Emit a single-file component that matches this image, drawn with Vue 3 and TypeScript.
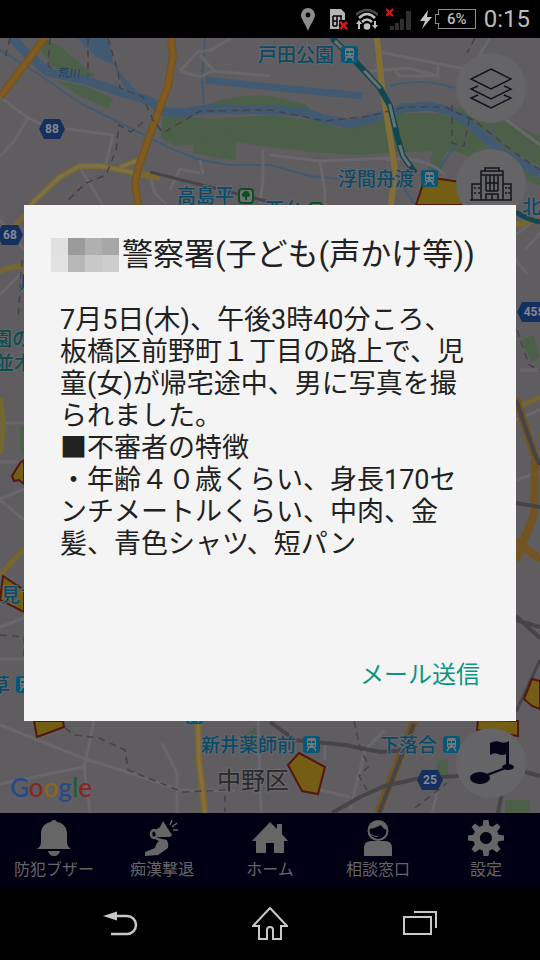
<script setup lang="ts">
interface Tab { id: string; label: string }
interface Station { x: number; y: number; label?: string; lx?: number; ly?: number }
interface Shield { x: number; y: number; w: number; text: string }

const title = '警察署(子ども(声かけ等))'
const lines: string[] = [
  '7月5日(木)、午後3時40分ころ、',
  '板橋区前野町１丁目の路上で、児',
  '童(女)が帰宅途中、男に写真を撮',
  'られました。',
  '■不審者の特徴',
  '・年齢４０歳くらい、身長170セ',
  'ンチメートルくらい、中肉、金',
  '髪、青色シャツ、短パン',
]
const mosaic: string[] = ['#e0e0e0', '#9b9b9b', '#b0b0b0', '#a7a7a7', '#e1e1e1', '#b7b7b7', '#c8c8c8', '#cdcdcd']

const tabs: Tab[] = [
  { id: 'bell', label: '防犯ブザー' },
  { id: 'horn', label: '痴漢撃退' },
  { id: 'home', label: 'ホーム' },
  { id: 'help', label: '相談窓口' },
  { id: 'gear', label: '設定' },
]
const teeth: number[] = [0, 45, 90, 135, 180, 225, 270, 315]

const stations: Station[] = [
  { x: 341, y: 46, label: '戸田公園', lx: 258, ly: 62 },
  { x: 421, y: 170, label: '浮間舟渡', lx: 338, ly: 186 },
  { x: 303, y: 736, label: '新井薬師前', lx: 201, ly: 752 },
  { x: 443, y: 736, label: '下落合', lx: 380, ly: 752 },
  { x: 16, y: 676, label: '草', lx: -9, ly: 692 },
  { x: 186, y: 707 },
]
const shields: Shield[] = [
  { x: 52, y: 129, w: 26, text: '88' },
  { x: 10, y: 235, w: 26, text: '68' },
  { x: 534, y: 312, w: 34, text: '455' },
  { x: 430, y: 780, w: 26, text: '25' },
]
function hexagon(s: Shield): string {
  const h = s.w / 2
  return `${s.x - h},${s.y} ${s.x - h + 5},${s.y - 10} ${s.x + h - 5},${s.y - 10} ${s.x + h},${s.y} ${s.x + h - 5},${s.y + 10} ${s.x - h + 5},${s.y + 10}`
}
</script>

<template>
  <div class="screen">
    <header class="status">
      <svg class="pin" viewBox="0 0 21 26"><path d="M7 2a7 7 0 0 1 7 7c0 4-4 8-7 16C4 17 0 13 0 9a7 7 0 0 1 7-7z" fill="#8c8c8c" /><circle cx="7" cy="9" r="2.4" fill="#000" /></svg>
      <svg class="sim" viewBox="0 0 18 26">
        <path d="M0 3h11l4 4v16H0z" fill="#b5b5b5" />
        <path d="M3 10h9M3 10v10M3 15h4M7 10v10M3 20h4M11 10v5" fill="none" stroke="#000" stroke-width="1.500" />
        <path d="M9 14h9v11H9z" fill="#000" />
        <path d="M10 16l7 7M17 16l-7 7" stroke="#d01818" stroke-width="2.600" />
      </svg>
      <svg class="wifi" viewBox="0 0 22 26">
        <path d="M0 9Q11-1 22 9" fill="none" stroke="#4a4a4a" stroke-width="2.500" />
        <path d="M3 12Q11 4 19 12M6 16Q11 11 16 16" fill="none" stroke="#c0c0c0" stroke-width="2.500" />
        <circle cx="11" cy="20.500" r="3.300" fill="#c0c0c0" />
        <path d="M0 18l3-4 3 4H4v5H2v-5zM16 19h2v-4h2v4h2l-3 4z" fill="#c0c0c0" />
      </svg>
      <svg class="signal" viewBox="0 0 26 26">
        <path d="M4 20h4v4H4zM9 17h4v7H9zM14 13h4v11h-4zM20 5h5v19h-5z" fill="#303030" />
        <path d="M0 3l7 7M7 3l-7 7" stroke="#d01818" stroke-width="2.400" />
      </svg>
      <div class="power">
        <svg class="bolt" viewBox="0 0 12 26"><path d="M8 4L0 15h5l-3 8 10-12H7z" fill="#c4c4c4" /></svg>
        <div class="battery">6%</div>
      </div>
      <time>0:15</time>
    </header>

    <div class="app">
      <main class="map">
        <svg class="tiles" viewBox="0 38 540 775" preserveAspectRatio="xMidYMid slice">
          <rect y="38" width="540" height="775" fill="#605d61" />
          <g fill="#4c6049">
            <path d="M42 38l18 8 22 19 14 11-15 2-30-12-9-14zM57 80l28 6 28 12-4 11-27-12-22-14z" />
            <path d="M200 107q35-14 70-11l35 8 8 7H205zM163 114l45 5 62-4 40 5 30 8 60-15 40 0 40 15 60 50v8l-45-20-40-15-55 1-40 3-50-3-40-5-35-5-60 4-14-8z" />
            <path d="M450 106l35 6 55 24v30l-40-20-35-28zM195 141l41-8v28l-43-8zM435 143l14 3-11 26-10-3z" />
            <path d="M20 428l4-2v32l-4-12zM522 340l12-5 5 22-8 5zM438 761l10-2v20l-11-8zM505 800h25v13h-25zM244 736l12-10 2 8z" />
          </g>
          <g fill="none" stroke="#415a72" stroke-linejoin="round">
            <path d="M12 38L28 55 48 72 85 80 123 93 150 101 165 112 183 113 207 109 270 110 303 112 323 119 353 124 380 116 403 108 430 106 450 111 470 124 503 153 540 174" stroke-width="9" />
            <path d="M205 80L270 87 363 96" stroke-width="7" />
            <path d="M78 38h30l5 24 10 14 22 25-15-3-12-24-3-9-16-6-13-12z" fill="#415a72" stroke="none" />
            <path d="M0 50L40 75 80 103 130 128 170 148 200 160 230 165 270 165 310 176 340 179M205 38L202 80 204 104M390 86q30-9 65 2M455 145l-18 28M492 122v28M400 184l15 20" stroke-width="2" />
          </g>
          <g fill="none" stroke="#69676b" stroke-width="3">
            <path d="M0 97L28 118 45 126 105 134 113 135 105 167M28 118L15 140 0 156M180 71l18-19 13-2 20-12M180 71l20 6 12-6 58 5M200 55l14 16M80 168l22 36M150 172l4 20 12 12M170 190l10-21 20 4M200 160l3 14M263 150v30l-3 24M380 52l90 18 20-32M370 71l38-3 30 8v-10M395 71l5 5 37 0M270 155l50 6 70-3M320 161l5 30v14M500 115l40 30M385 160q40-5 60 15" />
            <path d="M0 423h24M0 462h24M0 499l24-10M0 500l24 20M0 627l24-9M0 659h24M0 220l24 30M0 295l24-25M516 235l24-20M516 260l12 15M525 250l15-17M520 370h20M516 420l24-10M516 480l24-8" />
            <path d="M0 725L85 759 130 773 180 790 235 791M94 721L84 767 90 813M0 784L83 767M162 743l15 30v40M258 721l3 92M325 740v20M300 785l50 12M440 780l-8 33M350 810l15-60 20-20" />
          </g>
          <g fill="none" stroke="#777047" stroke-width="4">
            <path d="M30 205L60 177 80 166 100 166 135 173 160 178M120 167L139 160" stroke="#7b6731" stroke-width="6" />
            <path d="M30 205L60 177 80 166 100 166 135 173M120 167L139 160" stroke="#7c7349" stroke-width="3" />
            <path d="M377 38L382 86 390 136 395 170 391 205" stroke="#836e37" stroke-width="6" />
            <path d="M25 215L0 242M0 272q12-7 24-5M0 398q6 26 0 56M0 575L24 549M516 225l24-5M516 408l24-11" stroke="#77672f" stroke-width="5" />
            <path d="M198 721L199 760 205 813" stroke="#80652b" stroke-width="7" />
            <path d="M198 721L199 760 205 813" stroke="#7f7140" stroke-width="3" />
          </g>
          <g fill="none" stroke="#725321" stroke-width="8">
            <path d="M45 38L0 97M171 38L173 56 168 86 153 126 138 169 135 183 138 205" />
            <path d="M45 38L0 97M171 38L173 56 168 86 153 126 138 169 135 183 138 205" stroke="#7f5b22" stroke-width="5" />
            <path d="M516 398L535 457 534 515 516 560M516 540L540 560M414 721L378 813" />
          </g>
          <g fill="none" stroke="#464447" stroke-width="4">
            <path d="M516 400L535 455 540 465M516 503l24 4M516 616l24 22M516 620l24 7M414 724L379 813" />
            <path d="M332 813L360 797 385 786 420 778 460 776M270 722l25 18 50 5 35 7 25-2M525 772l15 4M498 813l5-25" />
            <path d="M150 172L270 202M540 660L516 712" stroke-width="3" />
          </g>
          <g fill="none" stroke="#454147" stroke-width="1.500" stroke-dasharray="7 5">
            <path d="M108 38L118 72 120 88 143 97 153 120 163 133 200 111 270 110 325 121 370 116 405 107 445 107 475 121 515 153 540 170M50 38L48 65 55 72M88 38v38M10 38l-5 20M143 122l-12 10-12-7-3 25-10 25-20 8-18 17M475 38l-8 15M452 105v38l12 3 8-40" />
            <path d="M22 260l-4 60M517 330l12 35 11 5M0 635l24 2v20M65 728l10 7 24 3 26 12 3 20 55 22 42-2v22M354 721l7 30 8 15-10 10 8 14M415 808l32-25" />
          </g>
          <path d="M332 38L357 63 380 88 390 106 397 136 403 156 415 173" fill="none" stroke="#124751" stroke-width="6" />
          <path d="M332 38L357 63 380 88 390 106 397 136 403 156 415 173" fill="none" stroke="#6a7073" stroke-width="3" stroke-dasharray="24 18" stroke-dashoffset="-4" />
          <path d="M516 212q12 8 24 10" fill="none" stroke="#124751" stroke-width="5" />
          <g fill="#745e14" stroke="#541610" stroke-width="2">
            <path d="M416 205L425 178 440 179 460 182 480 205zM24 460l-4 3-8 13 2 5 5-1 5 4zM3 576L24 590V612L0 600zM34 721l3 16 27-10-1-6zM299 753l26 14-7 27-16-3-14-26zM540 681l-8-2-8 20 8 7 8 3zM477 730l1-10 40 1v15z" />
          </g>

          <g v-for="s in stations" :key="s.x">
            <rect :x="s.x" :y="s.y" width="17" height="17" rx="3" fill="#075878" />
            <rect :x="s.x + 4" :y="s.y + 2" width="9" height="10" rx="2" fill="#75787b" />
            <path :d="`M${s.x + 6} ${s.y + 12}l-2 3M${s.x + 11} ${s.y + 12}l2 3`" stroke="#75787b" stroke-width="1.500" />
            <path :d="`M${s.x + 5} ${s.y + 5}h3v2h-3zM${s.x + 9} ${s.y + 5}h3v2h-3zM${s.x + 5} ${s.y + 9}h2v1h-2zM${s.x + 10} ${s.y + 9}h2v1h-2z`" fill="#075878" />
            <text v-if="s.label" class="place" :x="s.lx" :y="s.ly">{{ s.label }}</text>
          </g>
          <text class="place" x="177" y="203">高島平</text>
          <text class="place" x="265" y="217">西台</text>
          <text class="place" x="522" y="214">北</text>
          <text class="place" x="20" y="288">成</text>
          <text class="place" x="1" y="602">見す</text>
          <text class="place park" x="-7" y="346">園の</text>
          <text class="place park" x="-5" y="370">並木</text>
          <g fill="#706f72" stroke="#0a5020" stroke-width="2">
            <rect x="239" y="189" width="14" height="14" rx="3" />
            <rect x="310" y="203" width="12" height="12" rx="3" />
          </g>
          <path d="M246 191q3 0 3 2 2 1 1 3-1 1-3 1v3h-2v-3q-2 0-3-1-1-2 1-3 0-2 3-2z" fill="#0a5020" />
          <text class="river" x="58" y="76" transform="rotate(5 58 76)">荒川</text>
          <text class="ward" x="217" y="789">中野区</text>
          <g v-for="s in shields" :key="s.text">
            <polygon :points="hexagon(s)" fill="#15305f" />
            <text class="shield" :x="s.x" :y="s.y + 4">{{ s.text }}</text>
          </g>
          <text class="brand" x="10" y="797"><tspan fill="#244a89">G</tspan><tspan fill="#842821">o</tspan><tspan fill="#8b6813">o</tspan><tspan fill="#244a89">g</tspan><tspan fill="#1b602e">l</tspan><tspan fill="#842821">e</tspan></text>
        </svg>

        <div class="tools">
          <button type="button" aria-label="レイヤー">
            <svg viewBox="0 0 70 70" fill="none" stroke="#11101f" stroke-width="1.400">
              <path d="M35 16l20 10-20 10-20-10zM22 33l-7 3 20 10 20-10-7-3M22 42l-7 3 20 10 20-10-7-3" />
            </svg>
          </button>
          <button type="button" aria-label="施設">
            <svg viewBox="0 0 70 70" fill="none" stroke="#12151c" stroke-width="1.500">
              <path d="M14 51h42M16 51V35h9V22h4v-3h14v3h4v13h8v16M25 35v16M47 35v16M29 22h14M30 26v16M34 26v16M38 26v16M42 26v16M30 26h12M30 34h12M30 42h12M30 51v-6h12v6M36 45v6M25 26h22M18 39h2M22 39h2M18 44h2M22 44h2M49 39h2M52 39h2M49 44h2M52 44h2" />
            </svg>
          </button>
          <button type="button" class="last" aria-label="現在地">
            <svg viewBox="0 0 70 70" fill="#04041a">
              <path d="M34 15q6-3 10-1t9-1v27h-3V26q-4 2-8 0t-8 1z" />
              <ellipse cx="52" cy="39" rx="6" ry="3" /><ellipse cx="24" cy="50" rx="10" ry="6" />
              <path d="M26 49L52 39" stroke="#04041a" stroke-width="2" />
            </svg>
          </button>
        </div>
      </main>

      <nav class="tabs">
        <button v-for="tab in tabs" :key="tab.id" type="button">
          <svg viewBox="0 0 36 36" fill="currentColor">
            <g v-if="tab.id === 'bell'">
              <path d="M18 0a3 3 0 0 1 3 2c7 1 10 6 10 12v7c0 4 1 6 4 8H1c3-2 4-4 4-8v-7C5 8 8 3 15 2a3 3 0 0 1 3-2zM12 31h12q-1 5-6 5t-6-5z" />
            </g>
            <g v-else-if="tab.id === 'horn'">
              <path d="M19 1L28 15 26 17 14 17 10 11 16 7z" />
              <path d="M26 5l2-5M28 7l5-4M29 10h5" stroke="currentColor" stroke-width="1.500" />
              <ellipse cx="10" cy="14" rx="3" ry="4" fill="none" stroke="currentColor" stroke-width="2.500" />
              <path d="M12 17l6 2 5 1q2 4 1 8L14 35 1 36V32L11 28Q12 23 15 21L11 19z" />
            </g>
            <g v-else-if="tab.id === 'home'">
              <path d="M18 2l7 7V4h5v10l6 7h-4v12H22V23h-8v10H4V21H0z" />
            </g>
            <g v-else-if="tab.id === 'help'">
              <path d="M4 36V28q0-7 7-7h14q7 0 7 7v8z" />
              <circle cx="18" cy="10.500" r="9.500" fill="none" stroke="currentColor" stroke-width="2" />
              <path d="M9 9Q11 2 18 1q7 0 9 9-4-1-6-5-5 3-12 4z" />
              <path d="M10 14q4 3 8 2.500" stroke="currentColor" fill="none" />
            </g>
            <g v-else>
              <path fill-rule="evenodd" d="M18 5a13 13 0 1 0 .1 0zM18 12a6 6 0 1 1-.1 0z" />
              <path v-for="a in teeth" :key="a" d="M14.500 7l1-7h5l1 7z" :transform="`rotate(${a} 18 18)`" />
            </g>
          </svg>
          <span>{{ tab.label }}</span>
        </button>
      </nav>

      <div class="scrim">
        <section class="dialog" role="dialog" aria-labelledby="alert-title">
          <div class="heading">
            <div class="mosaic"><i v-for="(c, i) in mosaic" :key="i" :style="{ background: c }"></i></div>
            <h1 id="alert-title">{{ title }}</h1>
          </div>
          <p><span v-for="line in lines" :key="line">{{ line }}</span></p>
          <button type="button">メール送信</button>
        </section>
      </div>
    </div>

    <nav class="system">
      <button type="button" aria-label="戻る">
        <svg viewBox="0 0 36 36"><path d="M12 10h13a9 9 0 0 1 0 18H9" fill="none" stroke="#c8c8c8" stroke-width="2.500" /><path d="M1 10l14-4.500v9z" fill="#c8c8c8" /></svg>
      </button>
      <button type="button" aria-label="ホーム画面">
        <svg viewBox="0 0 36 36"><path d="M18 2L1 20h6v13h8v-9q0-3 3-3t3 3v9h8V20h6z" fill="none" stroke="#c8c8c8" stroke-width="2" /></svg>
      </button>
      <button type="button" aria-label="履歴">
        <svg viewBox="0 0 36 36" fill="none" stroke="#c8c8c8" stroke-width="2"><path d="M2 11h27v17H2zM12 6h22v16" /></svg>
      </button>
    </nav>
  </div>
</template>

<style>
body { margin: 0; background: #000; }
</style>

<style scoped>
.screen {
  display: flex;
  flex-direction: column;
  min-height: 100vh;
  background: #000;
  font-family: Roboto, "Noto Sans CJK JP", sans-serif;
}
button {
  margin: 0;
  padding: 0;
  border: 0;
  background: none;
  color: inherit;
  font: inherit;
  cursor: pointer;
}
svg { display: block; }
.status {
  display: flex;
  justify-content: flex-end;
  align-items: center;
  gap: 8px;
  height: 38px;
  padding-right: 10px;
  color: #bcbcbc;
}
.status svg { height: 26px; }
.pin { width: 21px; }
.sim { width: 18px; }
.wifi { width: 22px; }
.signal { width: 26px; }
.power { display: flex; align-items: center; gap: 6px; }
.bolt { width: 12px; }
.battery {
  position: relative;
  width: 36px;
  border: 1px solid #8c8c8c;
  font-size: 15px;
  font-weight: 500;
  line-height: 18px;
  text-align: center;
}
.battery::before {
  content: "";
  position: absolute;
  left: -4px;
  top: 4px;
  width: 3px;
  height: 8px;
  border: 1px solid #8c8c8c;
  border-right-color: #000;
  background: #000;
}
time { font-size: 24px; line-height: 38px; }
.app {
  position: relative;
  display: flex;
  flex: 1;
  flex-direction: column;
}
.map {
  position: relative;
  display: flex;
  flex: 1;
  overflow: hidden;
  background: #605d61;
}
.tiles {
  position: absolute;
  inset: 0;
  width: 100%;
  height: 100%;
}
.place {
  fill: #0b4a66;
  stroke: #68666a;
  stroke-width: 2px;
  paint-order: stroke;
  font-size: 19px;
  font-weight: 500;
}
.park { fill: #0d4e4d; }
.river { fill: #203a5e; font-size: 11px; }
.ward {
  fill: #29282a;
  stroke: #6c6a6e;
  stroke-width: 2px;
  paint-order: stroke;
  font-size: 24px;
}
.shield { fill: #85888f; font-size: 12px; font-weight: 700; text-anchor: middle; }
.brand { font-family: Lato, sans-serif; font-size: 26px; font-weight: 500; }
.tools {
  position: relative;
  display: flex;
  flex-direction: column;
  gap: 26px;
  margin-left: auto;
  padding: 15px 14px;
}
.tools button {
  width: 70px;
  height: 70px;
  border-radius: 50%;
  background: #656466;
}
.tools .last { margin-top: auto; }
.tabs {
  display: grid;
  grid-template-columns: repeat(5, 1fr);
  height: 75px;
  background: #000015;
  color: #666;
}
.tabs button {
  display: flex;
  flex-direction: column;
  align-items: center;
  padding-top: 7px;
  font-size: 16px;
  line-height: 28px;
}
.tabs svg { width: 36px; height: 36px; overflow: visible; }
.scrim {
  position: absolute;
  inset: 0;
  display: flex;
  align-items: center;
  padding: 24px;
}
.dialog {
  display: flex;
  flex: 1;
  flex-direction: column;
  padding: 33px 36px 28px;
  background: #f4f4f4;
  color: #212121;
}
.heading {
  display: flex;
  align-items: center;
  gap: 3px;
  margin: 0 -9px;
}
.mosaic {
  display: grid;
  flex: none;
  grid-template-columns: repeat(4, 17px);
  grid-auto-rows: 17px;
}
h1 {
  margin: 0;
  font-size: 31px;
  font-weight: 400;
  line-height: 34px;
  white-space: nowrap;
}
p {
  margin: 32px 0 97px;
  font-size: 27px;
  line-height: 32px;
}
p span { display: block; }
.dialog button {
  align-self: flex-end;
  color: #0a9482;
  font-size: 24px;
  line-height: 36px;
}
.system {
  display: grid;
  grid-template-columns: repeat(3, 1fr);
  height: 72px;
  padding: 0 45px;
}
.system button { display: grid; place-items: center; }
.system svg { width: 36px; height: 36px; }
</style>
